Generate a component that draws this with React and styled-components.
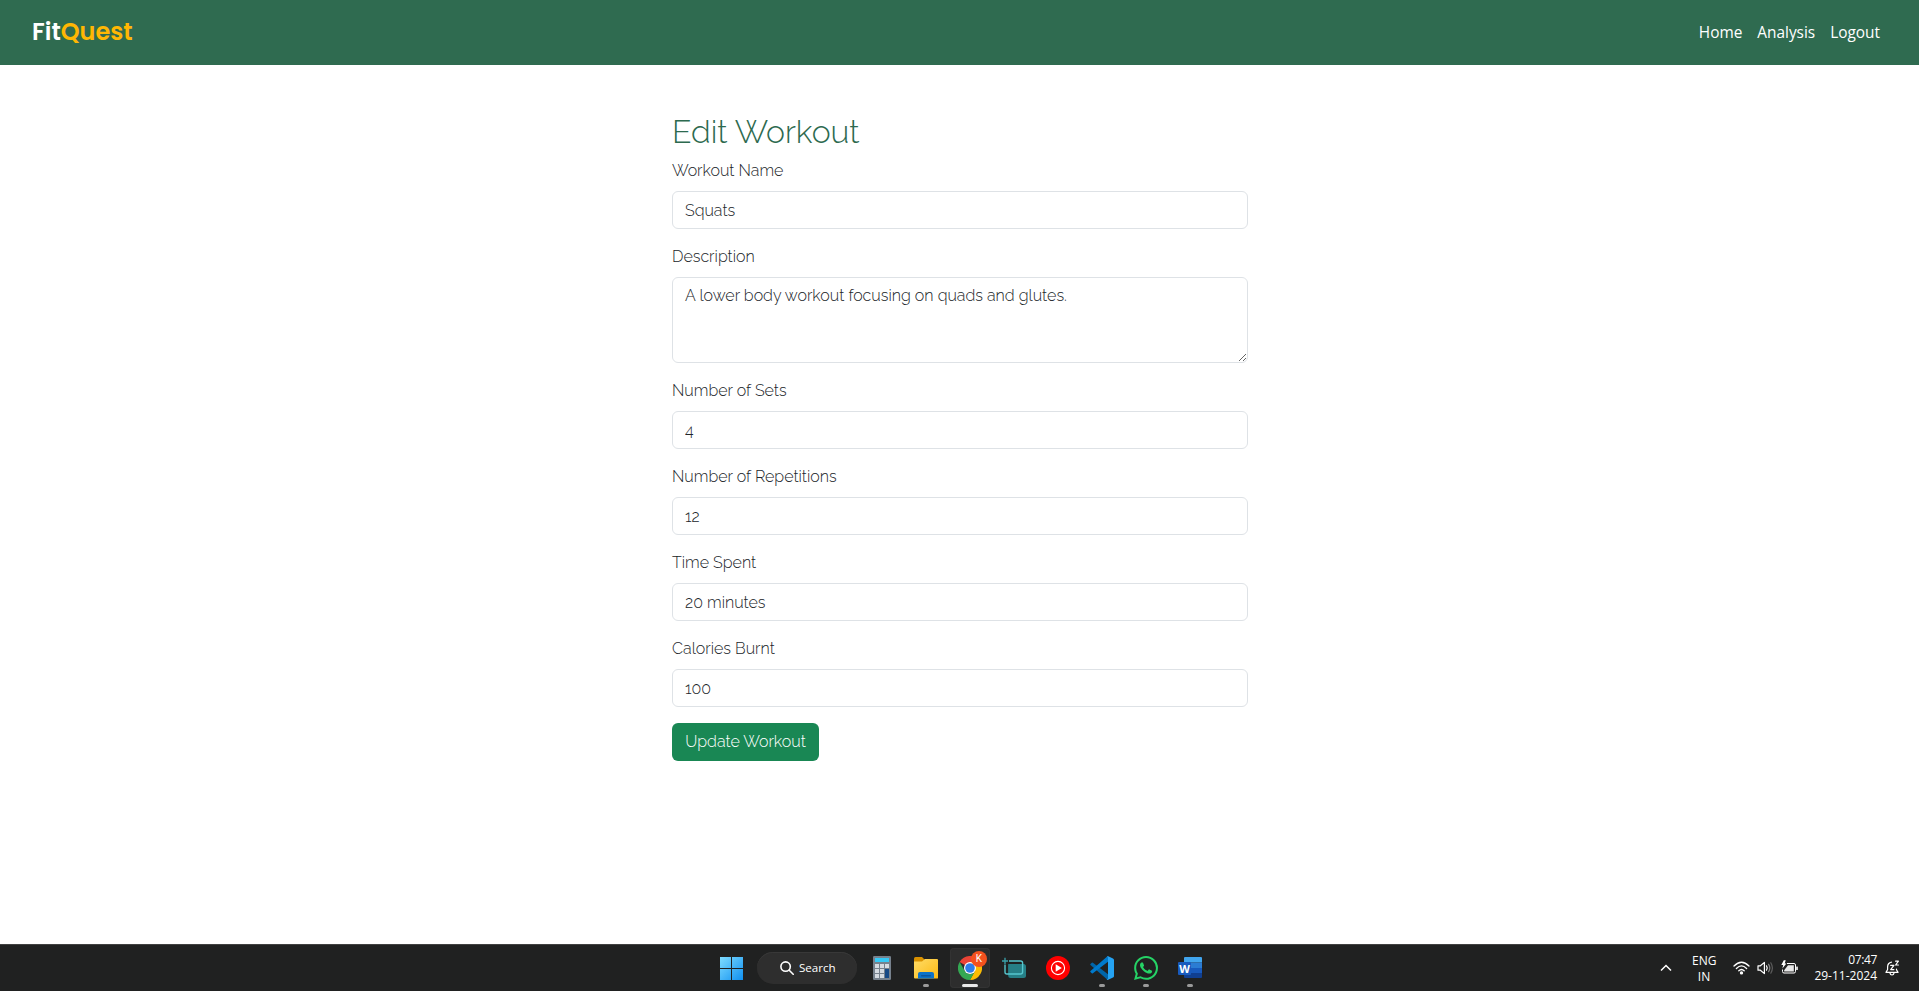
import React from "react";
import styled, { createGlobalStyle } from "styled-components";

const GlobalStyle = createGlobalStyle`
  *, *::before, *::after { box-sizing: border-box; }
  body {
    margin: 0;
    background: #fff;
    color: #212529;
    font: 300 16px/1.5 Raleway, Lato, sans-serif;
  }
`;

const Page = styled.div`
  display: flex;
  flex-direction: column;
  height: 991px;
  overflow: hidden;
`;

/* ---------- Navigation ---------- */

const Navbar = styled.nav`
  display: flex;
  align-items: center;
  justify-content: space-between;
  flex: none;
  height: 65px;
  padding: 0 39px 0 32px;
  background: #2f6b50;
`;

const Brand = styled.a`
  padding-bottom: 1px;
  color: #fff;
  font: 600 24px/36px Poppins, Inter, sans-serif;
`;

const BrandAccent = styled.span`
  color: #ffb703;
`;

const NavLinks = styled.div`
  display: flex;
  gap: 15px;
`;

const NavLink = styled.a`
  color: #fff;
  font: 400 15.4px/24px "Segoe UI", "Open Sans", sans-serif;
`;

/* ---------- Form ---------- */

const Main = styled.main`
  display: flex;
  flex: 1;
  justify-content: center;
  align-items: flex-start;
  padding: 48px 0 0 1px;
`;

const Form = styled.form`
  display: flex;
  flex-direction: column;
  align-items: flex-start;
  width: 576px;
`;

const Title = styled.h2`
  margin: 0 0 8px;
  color: #2d6a4f;
  font-size: 32px;
  font-weight: 300;
  line-height: 38.4px;
`;

const Field = styled.div`
  display: flex;
  flex-direction: column;
  gap: 8px;
  width: 100%;
  margin-bottom: 16px;
`;

const Label = styled.label`
  line-height: 24px;
`;

const Input = styled.input`
  display: block;
  width: 100%;
  height: 38px;
  padding: 6px 12px;
  border: 1px solid #dee2e6;
  border-radius: 6px;
  outline: none;
  background: #fff;
  color: #212529;
  font: inherit;
`;

const TextArea = styled(Input)`
  height: 86px;
  resize: vertical;
`;

const SubmitButton = styled.button`
  width: 147px;
  height: 38px;
  padding: 0;
  border: 0;
  border-radius: 6px;
  background: #198754;
  color: #fff;
  font: inherit;
`;

/* ---------- Taskbar ---------- */

const Taskbar = styled.footer`
  display: grid;
  grid-template-columns: 1fr auto 1fr;
  flex: none;
  height: 47px;
  padding-left: 3px;
  border-top: 1px solid #414141;
  background: #202121;
  color: #fff;
  font: 400 12px/16px "Segoe UI", "Open Sans", sans-serif;
`;

const Apps = styled.div`
  grid-column: 2;
  display: flex;
  align-items: center;
`;

const TaskbarApp = styled.div`
  position: relative;
  display: flex;
  align-items: center;
  justify-content: center;
  width: 40px;
  height: 40px;
  margin: 0 2px;
  border-radius: 4px;
  background: ${(p) => (p.$active ? "#2d2d2d" : "transparent")};
  box-shadow: ${(p) => (p.$active ? "inset 0 0 0 1px #333" : "none")};
  svg { display: block; }
  &::after {
    content: "";
    display: ${(p) => (p.$running || p.$active ? "block" : "none")};
    position: absolute;
    bottom: 1px;
    left: 50%;
    width: ${(p) => (p.$active ? 16 : 6)}px;
    height: 3px;
    border-radius: 2px;
    background: ${(p) => (p.$active ? "#e8e8e8" : "#9a9a9a")};
    transform: translateX(-50%);
  }
`;

const Badge = styled.span`
  position: absolute;
  top: 3px;
  left: 21px;
  width: 16px;
  height: 16px;
  border-radius: 50%;
  background: #f4511e;
  color: #fff;
  font: 400 10px/16px Roboto, sans-serif;
  text-align: center;
`;

const SearchBox = styled.div`
  display: flex;
  align-items: center;
  gap: 5px;
  width: 100px;
  height: 32px;
  margin: 0 3px;
  padding-left: 23px;
  border-radius: 16px;
  background: #2e2e2e;
  box-shadow: inset 0 1px 0 #383838;
  font-size: 11.6px;
`;

const Tray = styled.div`
  grid-column: 3;
  display: flex;
  align-items: center;
  justify-content: flex-end;
  padding-right: 19px;
  svg { display: block; }
`;

const Language = styled.div`
  width: 24px;
  margin: 1px 17px 0 20px;
  line-height: 16px;
  text-align: center;
`;

const StatusIcons = styled.div`
  display: flex;
  gap: 7px;
  margin-right: 16px;
`;

const Clock = styled.div`
  width: 63px;
  margin: 0 8px 1px 0;
  text-align: right;
  white-space: nowrap;
`;

const Time = styled.div`
  letter-spacing: -0.35px;
`;

/* ---------- Icons ---------- */

const WindowsIcon = () => (
  <svg width="24" height="24" viewBox="0 0 24 24">
    <defs>
      <linearGradient id="win" x1="0" y1="0" x2="1" y2="1">
        <stop offset="0" stopColor="#7fdcff" />
        <stop offset="1" stopColor="#1090f0" />
      </linearGradient>
    </defs>
    <path fill="url(#win)" d="M0 1H11V12H0ZM12 1H23V12H12ZM0 13H11V24H0ZM12 13H23V24H12Z" />
  </svg>
);

const SearchIcon = () => (
  <svg width="14" height="14" viewBox="0 0 14 14" fill="none" stroke="#fff" strokeWidth="1.6" strokeLinecap="round">
    <circle cx="5.6" cy="5.6" r="4.7" />
    <path d="M9.2 9.2L13.2 13.2" />
  </svg>
);

const CalculatorIcon = () => (
  <svg width="18" height="24" viewBox="0 0 18 24">
    <rect width="18" height="24" rx="1.2" fill="#76818d" />
    <rect x="2" y="2" width="14" height="4" fill="#35c8f5" />
    {[8, 13, 18].map((y) => (
      <g key={y} fill="#d5dbe2">
        <rect x="2" y={y} width="4" height="4" />
        <rect x="7" y={y} width="4" height="4" />
      </g>
    ))}
    <rect x="12" y="8" width="4" height="4" fill="#d5dbe2" />
    <rect x="12" y="13" width="4" height="9" fill="#174a86" />
  </svg>
);

const FolderIcon = () => (
  <svg width="24" height="24" viewBox="0 0 24 24">
    <defs>
      <linearGradient id="folder" x1="0" y1="0" x2="1" y2="1">
        <stop offset="0" stopColor="#ffdc66" />
        <stop offset="1" stopColor="#fbb914" />
      </linearGradient>
    </defs>
    <path fill="#d99100" d="M0 2.5Q0 1 1.5 1H8L10.5 3.5V7H0Z" />
    <path fill="url(#folder)" d="M0 5.5H8L11 3H23Q24 3 24 4V22Q24 22.5 23 22.5H1Q0 22.5 0 21.5Z" />
    <path fill="#0c72c7" d="M4 22.5V18Q4 16 6 16H18Q20 16 20 18V22.5Z" />
    <rect x="7" y="19" width="10" height="1.4" rx="0.7" fill="#0b559d" />
  </svg>
);

const ChromeIcon = () => (
  <svg width="24" height="24" viewBox="0 0 24 24">
    <path fill="#ea4335" d="M12 12L1.6 6A12 12 0 0 1 22.4 6Z" />
    <path fill="#fbbc04" d="M12 12V6H22.4A12 12 0 0 1 12 24L17 14.8Z" />
    <path fill="#34a853" d="M1.6 6L6.8 15A6 6 0 0 0 17.2 15L12 24A12 12 0 0 1 1.6 6Z" />
    <circle cx="12" cy="12" r="6" fill="#fff" />
    <circle cx="12" cy="12" r="4.8" fill="#2f7de9" />
  </svg>
);

const SnipIcon = () => (
  <svg width="24" height="24" viewBox="0 0 24 24" fill="none">
    <rect x="6.2" y="8" width="17.8" height="14" rx="2.5" fill="#267f86" />
    <rect x="2.8" y="5" width="18" height="13" rx="2" fill="#202121" fillOpacity=".35" />
    <rect x="6.2" y="8" width="14" height="10" fill="#267f86" />
    <path stroke="#56c6ce" strokeWidth="1.4" d="M7 5H18.5Q20.6 5 20.6 7V16Q20.6 18 18.5 18H5Q3 18 3 16V8.5" />
    <path stroke="#3aa3ab" strokeWidth="1.3" d="M3 1.8V8M0 5H6" />
  </svg>
);

const MusicIcon = () => (
  <svg width="24" height="24" viewBox="0 0 24 24">
    <circle cx="12" cy="12" r="12" fill="#f00" />
    <circle cx="12" cy="12" r="6.6" fill="none" stroke="#fff" strokeWidth="1.1" />
    <path fill="#fff" d="M9.7 8.3L15.8 12L9.7 15.7Z" />
  </svg>
);

const CodeIcon = () => (
  <svg width="24" height="24" viewBox="0 0 24 24">
    <path fill="#0065a9" d="M0.4 8L1.8 6.8Q2.3 6.4 2.9 6.8L18 18.2V23.6Q17.2 23.7 16.6 23.1L0.5 8.9Q0 8.5 0.4 8Z" />
    <path fill="#007acc" d="M0.4 16L1.8 17.2Q2.3 17.6 2.9 17.2L18 5.8V0.4Q17.2 0.3 16.6 0.9L0.5 15.1Q0 15.5 0.4 16Z" />
    <path fill="#25a3f3" d="M17.7 0L23 2.5Q24 3 24 4V20Q24 21 23 21.5L17.7 24Q17 24 16.6 23.4Q18 23.6 18 22V2Q18 0.4 16.6 0.6Q17 0 17.7 0Z" />
  </svg>
);

const WhatsAppIcon = () => (
  <svg width="24" height="24" viewBox="0 0 24 24">
    <path
      fill="#25d366"
      d="M17.472 14.382c-.297-.149-1.758-.867-2.03-.967-.273-.099-.471-.148-.67.15-.197.297-.767.966-.94 1.164-.173.199-.347.223-.644.075-.297-.15-1.255-.463-2.39-1.475-.883-.788-1.48-1.761-1.653-2.059-.173-.297-.018-.458.13-.606.134-.133.298-.347.446-.52.149-.174.198-.298.298-.497.099-.198.05-.371-.025-.52-.075-.149-.669-1.612-.916-2.207-.242-.579-.487-.5-.669-.51-.173-.008-.371-.01-.57-.01-.198 0-.52.074-.792.372-.272.297-1.04 1.016-1.04 2.479 0 1.462 1.065 2.875 1.213 3.074.149.198 2.096 3.2 5.077 4.487.709.306 1.262.489 1.694.625.712.227 1.36.195 1.871.118.571-.085 1.758-.719 2.006-1.413.248-.694.248-1.289.173-1.413-.074-.124-.272-.198-.57-.347m-5.421 7.403h-.004a9.87 9.87 0 01-5.031-1.378l-.361-.214-3.741.982.998-3.648-.235-.374a9.86 9.86 0 01-1.51-5.26c.001-5.45 4.436-9.884 9.888-9.884 2.64 0 5.122 1.03 6.988 2.898a9.825 9.825 0 012.893 6.994c-.003 5.45-4.437 9.884-9.885 9.884m8.413-18.297A11.815 11.815 0 0012.05 0C5.495 0 .16 5.335.157 11.892c0 2.096.547 4.142 1.588 5.945L.057 24l6.305-1.654a11.882 11.882 0 005.683 1.448h.005c6.554 0 11.89-5.335 11.893-11.893a11.821 11.821 0 00-3.48-8.413z"
    />
  </svg>
);

const WordTile = styled.span`
  position: absolute;
  left: 8px;
  top: 14px;
  width: 13px;
  height: 13px;
  border-radius: 1px;
  background: #185abd;
  color: #fff;
  font: 700 11px/13px "Open Sans", sans-serif;
  text-align: center;
`;

const WordIcon = () => (
  <svg width="24" height="24" viewBox="0 0 24 24">
    <path fill="#41a5ee" d="M6 6V2Q6 1 7 1H23Q24 1 24 2V6.5H6Z" />
    <path fill="#2b7cd3" d="M6 6.5H24V12H6Z" />
    <path fill="#185abd" d="M6 12H24V17H6Z" />
    <path fill="#103f91" d="M6 17H24V21Q24 22 23 22H7Q6 22 6 21Z" />
  </svg>
);

const ChevronIcon = () => (
  <svg width="12" height="8" viewBox="0 0 12 8" fill="none" stroke="#fff" strokeWidth="1.5">
    <path d="M1 6.5L6 1.5L11 6.5" />
  </svg>
);

const WifiIcon = () => (
  <svg width="17" height="16" viewBox="0 0 17 16" fill="none" stroke="#fff" strokeWidth="1.3" strokeLinecap="round">
    <path d="M1 6Q8.5 -1.5 16 6M3.4 8.5Q8.5 3.4 13.6 8.5M5.8 10.8Q8.5 8.2 11.2 10.8" />
    <circle cx="8.5" cy="12.9" r="1" fill="#fff" />
  </svg>
);

const VolumeIcon = () => (
  <svg width="17" height="16" viewBox="0 0 17 16" fill="none" stroke="#fff" strokeWidth="1.2" strokeLinecap="round" strokeLinejoin="round">
    <path d="M1 5.8H3.4L7.4 2.4V13.6L3.4 10.2H1Z" />
    <path d="M9.5 5.8Q11 8 9.5 10.2" />
    <path stroke="#858585" d="M11.6 4.3Q14 8 11.6 11.7" />
    <path stroke="#5c5c5c" d="M13.8 2.8Q17 8 13.8 13.2" />
  </svg>
);

const BatteryIcon = () => (
  <svg width="17" height="16" viewBox="0 0 17 16">
    <path fill="none" stroke="#fff" d="M6 3.5H13Q14.5 3.5 14.5 5V11.5Q14.5 13 13 13H3Q1.5 13 1.5 11.5V9.5" />
    <path fill="#e8e8e8" d="M7 5.2H12.8V11.4H3.2V10.2Z" />
    <rect x="15.2" y="6.6" width="1.6" height="3.4" rx="0.5" fill="#fff" />
    <path fill="#fff" d="M2.8 0.2L0.3 5H2.2L1.4 8.4L5.4 3.4H3.7L4.7 0.2Z" />
  </svg>
);

const BellIcon = () => (
  <svg width="15" height="16" viewBox="0 0 15 16" fill="none" stroke="#fff" strokeWidth="1.2" strokeLinecap="round" strokeLinejoin="round">
    <path d="M6.5 2.2Q2.6 3 2.6 7V9.5L1 12.4H13L11.5 9.8V9" />
    <path d="M5 13.2Q5.3 15 7 15T9 13.2" />
    <path d="M5.7 5.4H8.9L5.7 9.6H8.9M10.6 1.2H13.4L10.6 5H13.4" />
  </svg>
);

const FIELDS = [
  { id: "name", label: "Workout Name", value: "Squats" },
  { id: "description", label: "Description", value: "A lower body workout focusing on quads and glutes.", multiline: true },
  { id: "sets", label: "Number of Sets", value: "4" },
  { id: "repetitions", label: "Number of Repetitions", value: "12" },
  { id: "time", label: "Time Spent", value: "20 minutes" },
  { id: "calories", label: "Calories Burnt", value: "100" },
];

export default function App() {
  return (
    <Page>
      <GlobalStyle />
      <Navbar>
        <Brand>
          Fit<BrandAccent>Quest</BrandAccent>
        </Brand>
        <NavLinks>
          <NavLink>Home</NavLink>
          <NavLink>Analysis</NavLink>
          <NavLink>Logout</NavLink>
        </NavLinks>
      </Navbar>

      <Main>
        <Form>
          <Title>Edit Workout</Title>
          {FIELDS.map((f) => (
            <Field key={f.id}>
              <Label htmlFor={f.id}>{f.label}</Label>
              {f.multiline ? (
                <TextArea as="textarea" id={f.id} defaultValue={f.value} spellCheck={false} />
              ) : (
                <Input id={f.id} defaultValue={f.value} />
              )}
            </Field>
          ))}
          <SubmitButton type="button">Update Workout</SubmitButton>
        </Form>
      </Main>

      <Taskbar>
        <Apps>
          <TaskbarApp><WindowsIcon /></TaskbarApp>
          <SearchBox><SearchIcon />Search</SearchBox>
          <TaskbarApp><CalculatorIcon /></TaskbarApp>
          <TaskbarApp $running><FolderIcon /></TaskbarApp>
          <TaskbarApp $active><ChromeIcon /><Badge>K</Badge></TaskbarApp>
          <TaskbarApp><SnipIcon /></TaskbarApp>
          <TaskbarApp><MusicIcon /></TaskbarApp>
          <TaskbarApp $running><CodeIcon /></TaskbarApp>
          <TaskbarApp $running><WhatsAppIcon /></TaskbarApp>
          <TaskbarApp $running><WordIcon /><WordTile>W</WordTile></TaskbarApp>
        </Apps>
        <Tray>
          <ChevronIcon />
          <Language>ENG<br />IN</Language>
          <StatusIcons>
            <WifiIcon />
            <VolumeIcon />
            <BatteryIcon />
          </StatusIcons>
          <Clock>
            <Time>07:47</Time>
            29-11-2024
          </Clock>
          <BellIcon />
        </Tray>
      </Taskbar>
    </Page>
  );
}
